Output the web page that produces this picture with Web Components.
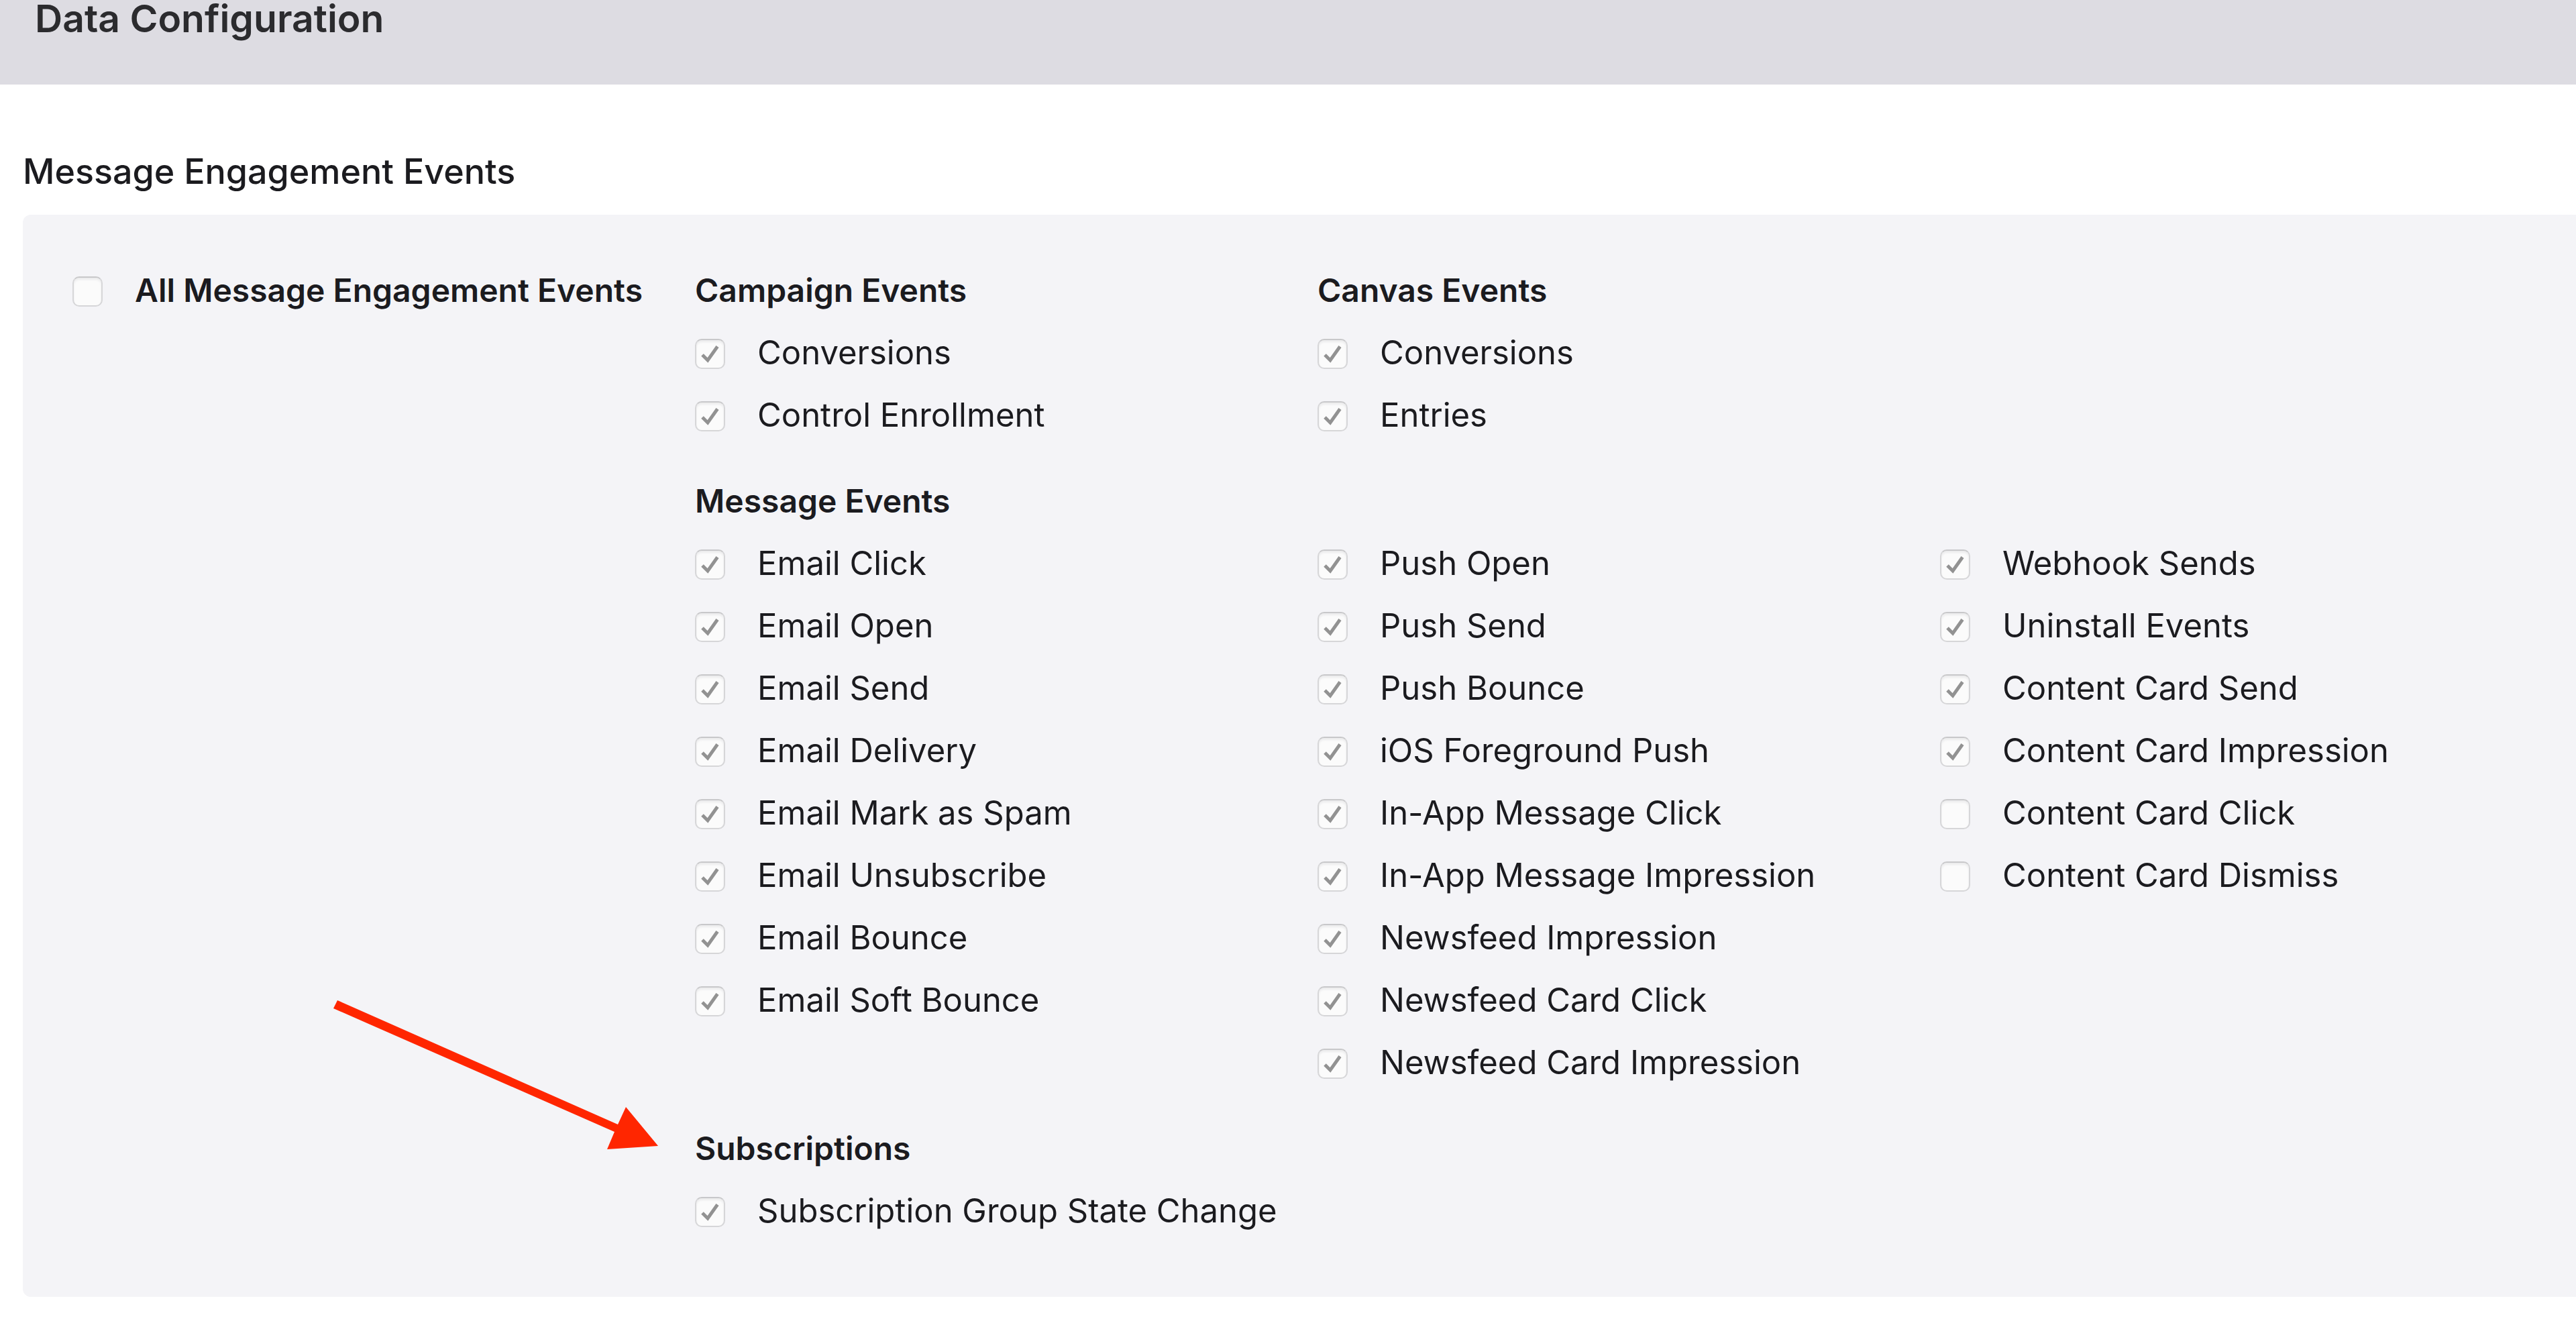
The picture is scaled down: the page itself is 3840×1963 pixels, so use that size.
<!DOCTYPE html>
<html lang="en">
<head>
    <meta charset="utf-8">
    <meta name="viewport" content="width=device-width, initial-scale=1">
    <title>Data Configuration</title>
    <style>
        body {
            margin: 0;
            background: #fff;
            color: #1b1b1f;
            font-family: Inter, "Liberation Sans", sans-serif;
        }
    </style>
</head>
<body>
    <config-header>Data Configuration</config-header>
    <event-section heading="Message Engagement Events">
        <event-check slot="all" strong>All Message Engagement Events</event-check>

        <event-group heading="Campaign Events">
            <event-list>
                <event-check checked>Conversions</event-check>
                <event-check checked>Control Enrollment</event-check>
            </event-list>
        </event-group>

        <event-group heading="Canvas Events">
            <event-list>
                <event-check checked>Conversions</event-check>
                <event-check checked>Entries</event-check>
            </event-list>
        </event-group>

        <event-group heading="Message Events" wide>
            <event-list>
                <event-check checked>Email Click</event-check>
                <event-check checked>Email Open</event-check>
                <event-check checked>Email Send</event-check>
                <event-check checked>Email Delivery</event-check>
                <event-check checked>Email Mark as Spam</event-check>
                <event-check checked>Email Unsubscribe</event-check>
                <event-check checked>Email Bounce</event-check>
                <event-check checked>Email Soft Bounce</event-check>
            </event-list>
            <event-list>
                <event-check checked>Push Open</event-check>
                <event-check checked>Push Send</event-check>
                <event-check checked>Push Bounce</event-check>
                <event-check checked>iOS Foreground Push</event-check>
                <event-check checked>In-App Message Click</event-check>
                <event-check checked>In-App Message Impression</event-check>
                <event-check checked>Newsfeed Impression</event-check>
                <event-check checked>Newsfeed Card Click</event-check>
                <event-check checked>Newsfeed Card Impression</event-check>
            </event-list>
            <event-list>
                <event-check checked>Webhook Sends</event-check>
                <event-check checked>Uninstall Events</event-check>
                <event-check checked>Content Card Send</event-check>
                <event-check checked>Content Card Impression</event-check>
                <event-check>Content Card Click</event-check>
                <event-check>Content Card Dismiss</event-check>
            </event-list>
        </event-group>

        <event-group heading="Subscriptions" wide>
            <callout-arrow slot="callout"></callout-arrow>
            <event-list>
                <event-check checked>Subscription Group State Change</event-check>
            </event-list>
        </event-group>
    </event-section>

    <script>
        class ConfigHeader extends HTMLElement {
            connectedCallback() {
                this.attachShadow({ mode: 'open' });
                this.shadowRoot.innerHTML = `
                    <style>
                        :host {
                            display: block;
                            padding: 0 52px 70px;
                            background: #dddce2;
                            color: #2b2b2e;
                        }
                        h1 {
                            margin: 0;
                            font-size: 57px;
                            font-weight: 600;
                            line-height: 56px;
                        }
                    </style>
                    <h1><slot></slot></h1>
                `;
            }
        }

        class EventSection extends HTMLElement {
            connectedCallback() {
                this.attachShadow({ mode: 'open' });
                this.shadowRoot.innerHTML = `
                    <style>
                        :host {
                            display: block;
                            padding: 98px 0 30px 34px;
                        }
                        h2 {
                            margin: 0 0 32px;
                            font-size: 52px;
                            font-weight: 500;
                            line-height: 64px;
                        }
                        .panel {
                            display: grid;
                            grid-template-columns: repeat(4, minmax(0, 1fr));
                            align-items: start;
                            row-gap: 35px;
                            padding: 66px 20px 82px 74px;
                            border-radius: 12px 0 0 12px;
                            background: #f4f4f7;
                        }
                    </style>
                    <h2>${this.getAttribute('heading')}</h2>
                    <div class="panel">
                        <slot name="all"></slot>
                        <slot></slot>
                    </div>
                `;
            }
        }

        class EventGroup extends HTMLElement {
            connectedCallback() {
                this.attachShadow({ mode: 'open' });
                this.shadowRoot.innerHTML = `
                    <style>
                        :host {
                            display: block;
                            position: relative;
                        }
                        :host([wide]) {
                            grid-column: 2 / -1;
                        }
                        h3 {
                            margin: 0;
                            font-size: 48px;
                            font-weight: 600;
                            line-height: 93px;
                        }
                        .lists {
                            display: grid;
                            grid-template-columns: minmax(0, 1fr);
                        }
                        :host([wide]) .lists {
                            grid-template-columns: repeat(3, minmax(0, 1fr));
                        }
                    </style>
                    <h3>${this.getAttribute('heading')}</h3>
                    <div class="lists"><slot></slot></div>
                    <slot name="callout"></slot>
                `;
            }
        }

        class EventList extends HTMLElement {
            connectedCallback() {
                this.attachShadow({ mode: 'open' });
                this.shadowRoot.innerHTML = `
                    <style>
                        :host {
                            display: flex;
                            flex-direction: column;
                        }
                    </style>
                    <slot></slot>
                `;
            }
        }

        class EventCheck extends HTMLElement {

            get checked() {
                return this.shadowRoot.querySelector('input').checked;
            }

            set checked(val) {
                this.shadowRoot.querySelector('input').checked = val;
            }

            _notify = () => {
                this.dispatchEvent(new CustomEvent('event-toggle', {
                    detail: { name: this.textContent, checked: this.checked },
                    bubbles: true,
                    composed: true,
                }));
            }

            connectedCallback() {
                this.attachShadow({ mode: 'open' });
                this.shadowRoot.innerHTML = `
                    <style>
                        :host {
                            display: block;
                            font-size: 49px;
                            line-height: 93px;
                        }
                        :host([strong]) {
                            font-size: 48px;
                            font-weight: 600;
                        }
                        label {
                            display: flex;
                            align-items: center;
                            gap: 48px;
                            white-space: nowrap;
                        }
                        .box {
                            display: grid;
                            flex: none;
                            width: 45px;
                            height: 45px;
                            margin-top: 4px;
                        }
                        .box > * {
                            grid-area: 1 / 1;
                        }
                        input {
                            appearance: none;
                            box-sizing: border-box;
                            width: 100%;
                            height: 100%;
                            margin: 0;
                            border: 2px solid #d6d6d8;
                            border-top-color: #c8c8ca;
                            border-radius: 10px;
                            background: #fbfbfb;
                            box-shadow: inset 0 3px 3px #ececed;
                        }
                        svg {
                            visibility: hidden;
                            pointer-events: none;
                        }
                        input:checked + svg {
                            visibility: visible;
                        }
                    </style>
                    <label>
                        <span class="box">
                            <input type="checkbox">
                            <svg viewBox="0 0 45 45" fill="none" stroke="#929292" stroke-width="5" aria-hidden="true">
                                <path d="M11 24 L19 32 L33.500 11.500"/>
                            </svg>
                        </span>
                        <span><slot></slot></span>
                    </label>
                `;
                this.checked = this.hasAttribute('checked');
                this.shadowRoot.querySelector('input').addEventListener('change', this._notify);
            }
        }

        // Points at the heading of the group it is slotted into
        class CalloutArrow extends HTMLElement {
            connectedCallback() {
                this.attachShadow({ mode: 'open' });
                this.shadowRoot.innerHTML = `
                    <style>
                        :host {
                            position: absolute;
                            top: -174px;
                            right: calc(100% + 55px);
                            width: 484px;
                            height: 222px;
                            pointer-events: none;
                        }
                        svg {
                            display: block;
                        }
                    </style>
                    <svg viewBox="0 0 484 222" width="484" height="222" aria-hidden="true">
                        <path fill="#ff2600" d="M6 0 L424 185 L436 159 L484 217 L408 222 L419 196 L0 12 Z"/>
                    </svg>
                `;
            }
        }

        customElements.define('config-header', ConfigHeader);
        customElements.define('event-section', EventSection);
        customElements.define('event-group', EventGroup);
        customElements.define('event-list', EventList);
        customElements.define('event-check', EventCheck);
        customElements.define('callout-arrow', CalloutArrow);
    </script>
</body>
</html>
